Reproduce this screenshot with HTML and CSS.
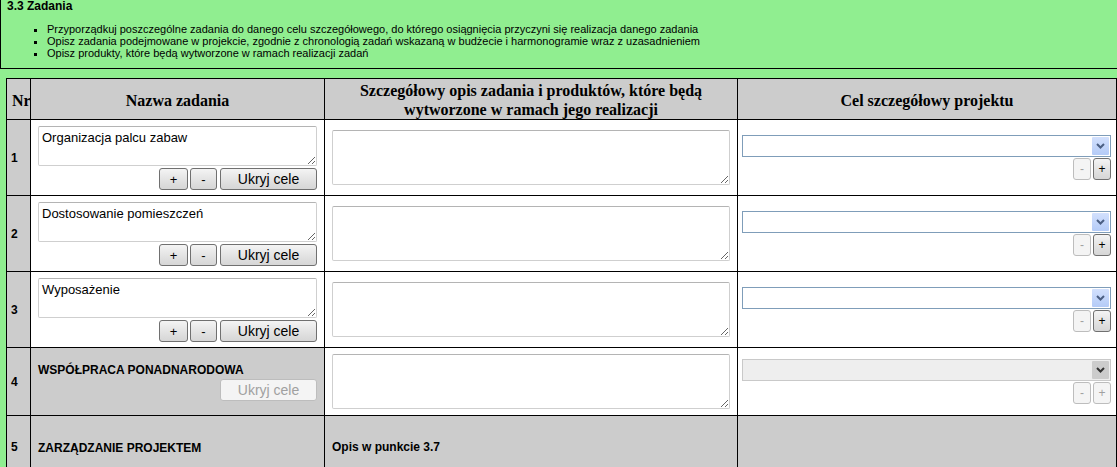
FILE: index.html
```html
<!DOCTYPE html>
<html lang="pl">
<head>
    <meta charset="UTF-8">
    <title>3.3 Zadania</title>
    <link rel="stylesheet" href="styles.css">
</head>
<body>
    <div class="section">
        <div class="section-head">
            <h3>3.3 Zadania</h3>
            <ul class="hints">
                <li>Przyporządkuj poszczególne zadania do danego celu szczegółowego, do którego osiągnięcia przyczyni się realizacja danego zadania</li>
                <li>Opisz zadania podejmowane w projekcie, zgodnie z chronologią zadań wskazaną w budżecie i harmonogramie wraz z uzasadnieniem</li>
                <li>Opisz produkty, które będą wytworzone w ramach realizacji zadań</li>
            </ul>
        </div>

        <table class="tasks">
            <colgroup>
                <col class="col-nr">
                <col class="col-name">
                <col class="col-desc">
                <col class="col-goal">
            </colgroup>
            <thead>
                <tr>
                    <th class="th-nr">Nr</th>
                    <th>Nazwa zadania</th>
                    <th>Szczegółowy opis zadania i produktów, które będą wytworzone w ramach jego realizacji</th>
                    <th>Cel szczegółowy projektu</th>
                </tr>
            </thead>
            <tbody>
                <tr>
                    <td class="nr">1</td>
                    <td class="name">
                        <textarea class="name-input">Organizacja palcu zabaw</textarea>
                        <div class="name-actions">
                            <button class="btn btn-sq">+</button>
                            <button class="btn btn-sq btn-minus">-</button>
                            <button class="btn btn-hide">Ukryj cele</button>
                        </div>
                    </td>
                    <td class="desc"><textarea class="desc-input"></textarea></td>
                    <td class="goal">
                        <div class="select"><span class="select-btn"><svg width="9" height="6" viewBox="0 0 9 6"><path d="M1 1 L4.5 4.5 L8 1" fill="none" stroke="#4b5f83" stroke-width="2"/></svg></span></div>
                        <div class="goal-actions">
                            <button class="btn btn-mini" disabled>-</button>
                            <button class="btn btn-mini">+</button>
                        </div>
                    </td>
                </tr>
                <tr>
                    <td class="nr">2</td>
                    <td class="name">
                        <textarea class="name-input">Dostosowanie pomieszczeń</textarea>
                        <div class="name-actions">
                            <button class="btn btn-sq">+</button>
                            <button class="btn btn-sq btn-minus">-</button>
                            <button class="btn btn-hide">Ukryj cele</button>
                        </div>
                    </td>
                    <td class="desc"><textarea class="desc-input"></textarea></td>
                    <td class="goal">
                        <div class="select"><span class="select-btn"><svg width="9" height="6" viewBox="0 0 9 6"><path d="M1 1 L4.5 4.5 L8 1" fill="none" stroke="#4b5f83" stroke-width="2"/></svg></span></div>
                        <div class="goal-actions">
                            <button class="btn btn-mini" disabled>-</button>
                            <button class="btn btn-mini">+</button>
                        </div>
                    </td>
                </tr>
                <tr>
                    <td class="nr">3</td>
                    <td class="name">
                        <textarea class="name-input">Wyposażenie</textarea>
                        <div class="name-actions">
                            <button class="btn btn-sq">+</button>
                            <button class="btn btn-sq btn-minus">-</button>
                            <button class="btn btn-hide">Ukryj cele</button>
                        </div>
                    </td>
                    <td class="desc"><textarea class="desc-input"></textarea></td>
                    <td class="goal">
                        <div class="select"><span class="select-btn"><svg width="9" height="6" viewBox="0 0 9 6"><path d="M1 1 L4.5 4.5 L8 1" fill="none" stroke="#4b5f83" stroke-width="2"/></svg></span></div>
                        <div class="goal-actions">
                            <button class="btn btn-mini" disabled>-</button>
                            <button class="btn btn-mini">+</button>
                        </div>
                    </td>
                </tr>
                <tr>
                    <td class="nr">4</td>
                    <td class="name fixed">
                        <div class="fixed-title">WSPÓŁPRACA PONADNARODOWA</div>
                        <div class="name-actions">
                            <button class="btn btn-hide" disabled>Ukryj cele</button>
                        </div>
                    </td>
                    <td class="desc"><textarea class="desc-input"></textarea></td>
                    <td class="goal">
                        <div class="select select-disabled"><span class="select-btn"><svg width="9" height="6" viewBox="0 0 9 6"><path d="M1 1 L4.5 4.5 L8 1" fill="none" stroke="#333" stroke-width="2"/></svg></span></div>
                        <div class="goal-actions">
                            <button class="btn btn-mini" disabled>-</button>
                            <button class="btn btn-mini" disabled>+</button>
                        </div>
                    </td>
                </tr>
                <tr class="row-static">
                    <td class="nr">5</td>
                    <td class="name fixed"><div class="fixed-title">ZARZĄDZANIE PROJEKTEM</div></td>
                    <td class="desc fixed"><div class="fixed-title">Opis w punkcie 3.7</div></td>
                    <td class="goal fixed"></td>
                </tr>
            </tbody>
        </table>
    </div>
</body>
</html>
```

FILE: styles.css
```css
body {
    margin: 0;
    background: #90ee90;
    font-family: "Liberation Sans", Arial, sans-serif;
    color: #000;
}
.section-head {
    height: 68px;
    border-left: 1px solid #000;
    border-bottom: 1px solid #000;
    padding: 0 0 0 6px;
}
.section-head h3 {
    margin: 0;
    font-size: 12px;
    line-height: 13px;
    font-weight: bold;
}
.hints {
    margin: 10px 0 0;
    padding-left: 40px;
    list-style: square;
    font-size: 11px;
    line-height: 12px;
}
.tasks {
    margin: 9px 0 0 6px;
    width: 1110px;
    table-layout: fixed;
    border-collapse: collapse;
}
.col-nr { width: 24px; }
.col-name { width: 294px; }
.col-desc { width: 413px; }
.col-goal { width: 379px; }
.tasks th,
.tasks td {
    border: 1px solid #000;
    padding: 0;
}
.tasks th {
    background: #cccccc;
    font-family: "Liberation Serif", "Times New Roman", serif;
    font-size: 16px;
    line-height: 19px;
    font-weight: bold;
    padding: 2px 2px 0;
}
.tasks th.th-nr {
    text-align: left;
    padding-left: 5px;
    overflow: hidden;
    white-space: nowrap;
}
.tasks td {
    background: #fff;
    vertical-align: middle;
}
.tasks td.nr {
    background: #cccccc;
    font-size: 12px;
    font-weight: bold;
    padding-left: 4px;
}
.tasks td.fixed {
    background: #cccccc;
}
.tasks td.name {
    padding: 6px 7px 5px;
}
.tasks td.desc {
    padding: 6px 7px;
}
.tasks td.goal {
    padding: 0 4px;
}
.row-static td {
    height: 50px;
}
textarea {
    display: block;
    box-sizing: border-box;
    margin: 0;
    border: 1px solid #cfcfcf;
    border-top-color: #b4b4b4;
    border-radius: 2px;
    background: #fff;
    font-family: "Liberation Sans", Arial, sans-serif;
    font-size: 13px;
    line-height: 15px;
    padding: 3px;
    color: #000;
}
.name-input {
    width: 279px;
    height: 40px;
}
.desc-input {
    width: 398px;
    height: 55px;
}
.name-actions {
    display: flex;
    justify-content: flex-end;
    gap: 2px;
    margin-top: 2px;
}
.btn {
    box-sizing: border-box;
    height: 22px;
    padding: 0;
    border: 1px solid #707070;
    border-radius: 3px;
    background: linear-gradient(#f4f4f4, #e4e4e4 50%, #d6d6d6);
    font-family: "Liberation Sans", Arial, sans-serif;
    font-size: 14px;
    color: #000;
}
.btn:disabled {
    border-color: #bdbdbd;
    background: #f4f4f4;
    color: #a0a0a0;
}
.btn-sq {
    width: 29px;
    font-size: 13px;
}
.btn-minus {
    width: 27px;
    margin-right: 1px;
}
.btn-hide {
    width: 97px;
}
.fixed-title {
    font-size: 12px;
    font-weight: bold;
    line-height: 14px;
}
.select {
    box-sizing: border-box;
    display: flex;
    justify-content: flex-end;
    align-items: center;
    width: 369px;
    height: 22px;
    border: 1px solid #7f9db9;
    background: #fff;
    padding: 1px;
}
.select-btn {
    display: flex;
    align-items: center;
    justify-content: center;
    width: 17px;
    height: 18px;
    background: linear-gradient(#d2e0fd, #b4cbf7);
    border-radius: 1px;
}
.select-disabled {
    border-color: #c9c9c9;
    background: #eeeeee;
}
.select-disabled .select-btn {
    background: #cccccc;
}
.goal-actions {
    display: flex;
    justify-content: flex-end;
    gap: 2px;
    margin-top: 1px;
    padding-right: 1px;
}
.btn-mini {
    width: 18px;
    height: 22px;
    font-size: 12px;
}
```
